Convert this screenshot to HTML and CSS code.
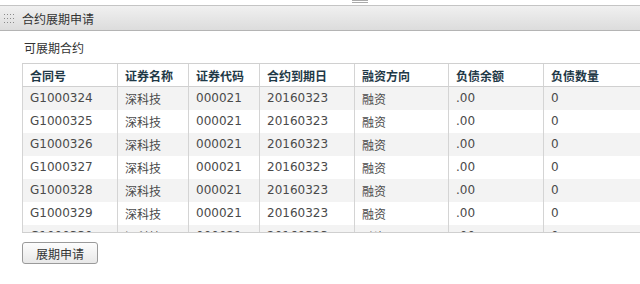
FILE: index.html
```html
<!DOCTYPE html>
<html lang="zh">
<head>
<meta charset="utf-8">
<link rel="stylesheet" href="styles.css">
</head>
<body>
<div class="topstrip"><span class="grip"></span></div>
<div class="panel-head">
  <svg class="dots" width="12" height="9" viewBox="0 0 12 9">
    <g fill="#8a8a8a">
      <rect x="0" y="0" width="1" height="1"/><rect x="3" y="0" width="1" height="1"/><rect x="6" y="0" width="1" height="1"/><rect x="9" y="0" width="1" height="1"/>
      <rect x="0" y="4" width="1" height="1"/><rect x="3" y="4" width="1" height="1"/><rect x="6" y="4" width="1" height="1"/><rect x="9" y="4" width="1" height="1"/>
      <rect x="0" y="8" width="1" height="1"/><rect x="3" y="8" width="1" height="1"/><rect x="6" y="8" width="1" height="1"/><rect x="9" y="8" width="1" height="1"/>
    </g>
  </svg>
  <span class="title">合约展期申请</span>
</div>
<div class="content">
  <div class="subtitle">可展期合约</div>
  <div class="grid-wrap">
    <table class="grid">
      <colgroup>
        <col class="c1"><col class="c2"><col class="c3"><col class="c4"><col class="c5"><col class="c6"><col class="c7">
      </colgroup>
      <thead>
        <tr><th>合同号</th><th>证券名称</th><th>证券代码</th><th>合约到期日</th><th>融资方向</th><th>负债余额</th><th>负债数量</th></tr>
      </thead>
      <tbody>
        <tr><td>G1000324</td><td>深科技</td><td>000021</td><td>20160323</td><td>融资</td><td>.00</td><td>0</td></tr>
        <tr><td>G1000325</td><td>深科技</td><td>000021</td><td>20160323</td><td>融资</td><td>.00</td><td>0</td></tr>
        <tr><td>G1000326</td><td>深科技</td><td>000021</td><td>20160323</td><td>融资</td><td>.00</td><td>0</td></tr>
        <tr><td>G1000327</td><td>深科技</td><td>000021</td><td>20160323</td><td>融资</td><td>.00</td><td>0</td></tr>
        <tr><td>G1000328</td><td>深科技</td><td>000021</td><td>20160323</td><td>融资</td><td>.00</td><td>0</td></tr>
        <tr><td>G1000329</td><td>深科技</td><td>000021</td><td>20160323</td><td>融资</td><td>.00</td><td>0</td></tr>
        <tr><td>G1000330</td><td>深科技</td><td>000021</td><td>20160323</td><td>融资</td><td>.00</td><td>0</td></tr>
      </tbody>
    </table>
  </div>
  <button class="btn">展期申请</button>
</div>
</body>
</html>
```
FILE: styles.css
```css
html, body {
  margin: 0;
  padding: 0;
  background: #fff;
  font-family: "DejaVu Sans", Verdana, "Noto Sans CJK SC", sans-serif;
  font-size: 12px;
  color: #444;
  width: 640px;
  height: 284px;
  overflow: hidden;
}
.topstrip {
  height: 5px;
  position: relative;
  background: #fff;
}
.grip {
  position: absolute;
  left: 352px;
  top: 0;
  width: 16px;
  height: 3px;
  border-top: 1px solid #aaa;
  border-bottom: 1px solid #aaa;
  box-sizing: border-box;
}
.panel-head {
  height: 24px;
  border-top: 1px solid #c4c4c4;
  border-bottom: 1px solid #b4b4b4;
  background: linear-gradient(#f0f0f0, #e6e6e6 50%, #dcdcdc);
  display: flex;
  align-items: center;
  padding-left: 4px;
  gap: 6px;
}
.dots {
  display: block;
}
.title {
  font-family: "Noto Sans CJK SC", sans-serif;
  font-size: 12px;
  color: #333;
}
.content {
  padding: 9px 0 0 22px;
}
.subtitle {
  font-family: "Noto Sans CJK SC", sans-serif;
  font-size: 12px;
  color: #333;
  height: 16px;
  line-height: 16px;
  margin-left: 2px;
  margin-bottom: 7px;
}
.grid-wrap {
  height: 170px;
  overflow: hidden;
  border-bottom: 1px solid #cfcfcf;
  box-sizing: border-box;
}
.grid {
  border-collapse: collapse;
  table-layout: fixed;
  width: 640px;
}
.c1 { width: 95px; }
.c2 { width: 71px; }
.c3 { width: 71px; }
.c4 { width: 95px; }
.c5 { width: 94px; }
.c6 { width: 95px; }
.c7 { width: 119px; }
.grid th, .grid td {
  height: 23px;
  padding: 0 0 0 7px;
  border-left: 1px solid #d4d4d4;
  text-align: left;
  white-space: nowrap;
  overflow: hidden;
  box-sizing: border-box;
}
.grid th {
  font-weight: bold;
  color: #1f3947;
  font-family: "Noto Sans CJK SC", sans-serif;
  border-top: 1px solid #d0d0d0;
  border-bottom: 1px solid #d0d0d0;
  background: #fff;
}
.grid td {
  color: #4a4a4a;
}
.grid tbody tr:nth-child(odd) td {
  background: #f3f3f3;
}
.btn {
  margin-top: 9px;
  width: 76px;
  height: 22px;
  border: 1px solid #9a9a9a;
  border-radius: 3px;
  background: linear-gradient(#fdfdfd, #e8e8e8);
  font-family: "Noto Sans CJK SC", sans-serif;
  font-size: 12px;
  color: #333;
  padding: 0;
  display: block;
}
```
